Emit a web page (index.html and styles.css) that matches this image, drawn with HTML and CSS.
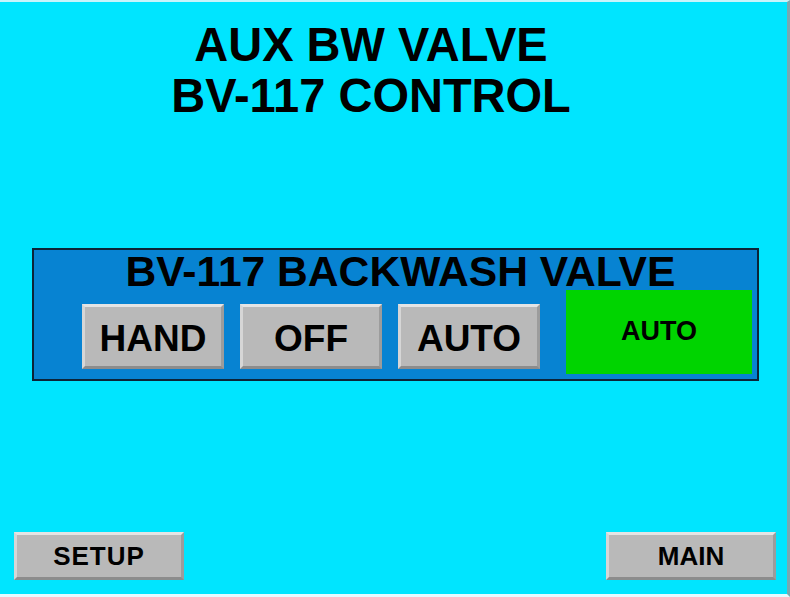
FILE: index.html
```html
<!DOCTYPE html>
<html>
<head>
<meta charset="utf-8">
<link rel="stylesheet" href="styles.css">
</head>
<body>
<div class="screen">
  <div class="title">
    <div class="title-line">AUX BW VALVE</div>
    <div class="title-line">BV-117 CONTROL</div>
  </div>
  <div class="panel">
    <div class="panel-title">BV-117 BACKWASH VALVE</div>
    <div class="panel-row">
      <div class="btn btn-mode">HAND</div>
      <div class="btn btn-mode">OFF</div>
      <div class="btn btn-mode">AUTO</div>
      <div class="status">AUTO</div>
    </div>
  </div>
  <div class="footer">
    <div class="btn btn-nav btn-setup">SETUP</div>
    <div class="btn btn-nav">MAIN</div>
  </div>
</div>
</body>
</html>
```
FILE: styles.css
```css
html, body {
  margin: 0;
  padding: 0;
  background: #00e5ff;
}
body {
  font-family: "Liberation Sans", Arial, sans-serif;
  font-weight: bold;
  color: #000;
}
.screen {
  box-sizing: border-box;
  width: 790px;
  height: 597px;
  background: #00e5ff;
  border-top: 2px solid #c8f4fb;
  border-right: 3px solid #7aa8b0;
  border-bottom: 3px solid #e6fbff;
  display: flex;
  flex-direction: column;
}
.title {
  width: 742px;
  text-align: center;
  padding-top: 16px;
}
.title-line {
  font-size: 47px;
  line-height: 51px;
  transform: scaleY(1.04);
}
.panel {
  margin-top: 128px;
  margin-left: 32px;
  width: 727px;
  height: 133px;
  box-sizing: border-box;
  border: 2px solid #0b2438;
  background: #0783d2;
}
.panel-title {
  font-size: 42.6px;
  line-height: 39px;
  padding-top: 2px;
  height: 39px;
  box-sizing: border-box;
  text-align: center;
  padding-left: 10px;
}
.panel-row {
  display: flex;
  align-items: flex-start;
  padding-left: 48px;
}
.btn {
  box-sizing: border-box;
  background: #b9b9b9;
  border-top: 3px solid #e4e4e4;
  border-left: 3px solid #d6d6d6;
  border-bottom: 3px solid #8c8c8c;
  border-right: 3px solid #9c9c9c;
  display: flex;
  align-items: center;
  justify-content: center;
}
.btn-mode {
  width: 142px;
  height: 65px;
  margin-top: 15px;
  margin-right: 16px;
  font-size: 37px;
  padding-top: 4px;
}
.btn-mode:nth-child(3) {
  margin-right: 26px;
}
.status {
  width: 186px;
  height: 84px;
  margin-top: 1px;
  background: #00d400;
  display: flex;
  align-items: center;
  justify-content: center;
  font-size: 27px;
  padding-bottom: 2px;
  box-sizing: border-box;
}
.footer {
  margin-top: auto;
  margin-bottom: 14px;
  display: flex;
  justify-content: space-between;
  padding-left: 14px;
  padding-right: 11px;
}
.btn-nav {
  width: 170px;
  height: 48px;
  font-size: 26px;
}
.btn-setup {
  letter-spacing: 1px;
}
```
